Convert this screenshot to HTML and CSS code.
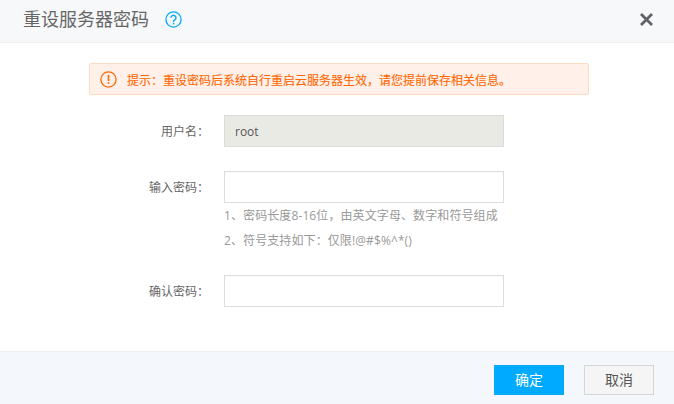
FILE: index.html
```html
<!DOCTYPE html>
<html lang="zh-CN">
<head>
<meta charset="utf-8">
<title>重设服务器密码</title>
<link rel="stylesheet" href="styles.css">
</head>
<body>
<div class="dialog">
  <header class="head">
    <h1 class="title">重设服务器密码</h1>
    <svg class="help" width="17" height="17" viewBox="0 0 17 17" aria-hidden="true">
      <circle cx="8.5" cy="8.5" r="7.6" fill="none" stroke="#00aaff" stroke-width="1.3"/>
      <path d="M6 6.8a2.5 2.5 0 1 1 3.8 2.1c-.9.5-1.3 1-1.3 2" fill="none" stroke="#00aaff" stroke-width="1.4"/>
      <rect x="7.8" y="11.8" width="1.5" height="1.6" fill="#00aaff"/>
    </svg>
    <svg class="close" width="13" height="13" viewBox="0 0 13 13" aria-hidden="true">
      <path d="M1 1l11 11M12 1L1 12" stroke="#5f6266" stroke-width="2.8" fill="none"/>
    </svg>
  </header>
  <main class="body">
    <div class="notice">
      <svg class="warn" width="17" height="17" viewBox="0 0 17 17" aria-hidden="true">
        <circle cx="8.5" cy="8.5" r="7.6" fill="none" stroke="#ff6600" stroke-width="1.3"/>
        <rect x="7.7" y="3.8" width="1.6" height="6.2" fill="#ff6600"/>
        <rect x="7.7" y="11.2" width="1.6" height="1.7" fill="#ff6600"/>
      </svg>
      <span class="notice-text">提示：重设密码后系统自行重启云服务器生效，请您提前保存相关信息。</span>
    </div>
    <div class="row row-user">
      <label class="label">用户名：</label>
      <div class="field field-off">root</div>
    </div>
    <div class="row row-pass">
      <label class="label">输入密码：</label>
      <div class="col">
        <div class="field"></div>
        <p class="tip">1、密码长度8-16位，由英文字母、数字和符号组成</p>
        <p class="tip">2、符号支持如下：仅限!@#$%^*()</p>
      </div>
    </div>
    <div class="row row-confirm">
      <label class="label">确认密码：</label>
      <div class="field"></div>
    </div>
  </main>
  <footer class="foot">
    <button class="btn btn-ok">确定</button>
    <button class="btn btn-cancel">取消</button>
  </footer>
</div>
</body>
</html>
```

FILE: styles.css
```css
* { box-sizing: border-box; }
html, body { margin: 0; padding: 0; }
body {
  width: 674px;
  height: 404px;
  overflow: hidden;
  background: #fff;
  font-family: "Open Sans", "Noto Sans CJK SC", sans-serif;
  font-size: 12px;
  color: #666;
}
.dialog { display: flex; flex-direction: column; height: 404px; }
.head {
  height: 43px;
  flex: none;
  display: flex;
  align-items: center;
  padding: 0 21px 3px 23px;
  background: #f7f8fa;
  border-bottom: 1px solid #eeeff1;
}
.title { margin: 0 0 2px; font-size: 18px; font-weight: 400; color: #666; line-height: 24px; }
.help { margin-left: 16px; }
.close { margin-left: auto; }
.body { flex: 1; padding: 20px 85px 0 89px; }
.notice {
  width: 500px;
  height: 32px;
  display: flex;
  align-items: center;
  padding-left: 10px;
  background: #fff1e9;
  border: 1px solid #ffd9c0;
  border-radius: 2px;
  color: #ff6600;
  font-size: 12px;
}
.notice-text { padding-top: 2px; -webkit-text-stroke: 0.1px #ff6600; }
.warn { margin-right: 10px; flex: none; }
.row { display: flex; align-items: flex-start; }
.row-user { margin-top: 20px; }
.row-pass { margin-top: 24px; }
.row-confirm { margin-top: 22px; }
.label {
  width: 135px;
  height: 32px;
  padding-right: 15px;
  flex: none;
  text-align: right;
  line-height: 34px;
  white-space: nowrap;
  color: #666;
}
.field {
  width: 280px;
  height: 32px;
  background: #fff;
  border: 1px solid #dcdcdc;
  padding-left: 10px;
  line-height: 32px;
  font-size: 12px;
  color: #555;
}
.field-off { background: #eaeae5; }
.col { width: 280px; }
.tip { margin: 0; padding-top: 1px; line-height: 24px; height: 25px; color: #999; white-space: nowrap; letter-spacing: 0.1px; }
.foot {
  height: 53px;
  flex: none;
  display: flex;
  justify-content: flex-end;
  align-items: flex-start;
  gap: 20px;
  padding: 13px 20px 0 0;
  background: #f4f7fb;
  border-top: 1px solid #eceef0;
}
.btn {
  width: 70px;
  height: 30px;
  padding: 0 0 2px;
  border-radius: 0;
  font-family: "Noto Sans CJK SC", sans-serif;
  font-size: 14px;
}
.btn-ok { background: #00aaff; border: 1px solid #00aaff; color: #fff; }
.btn-cancel { background: #f5f5f5; border: 1px solid #d5d5d5; color: #555; }
```
